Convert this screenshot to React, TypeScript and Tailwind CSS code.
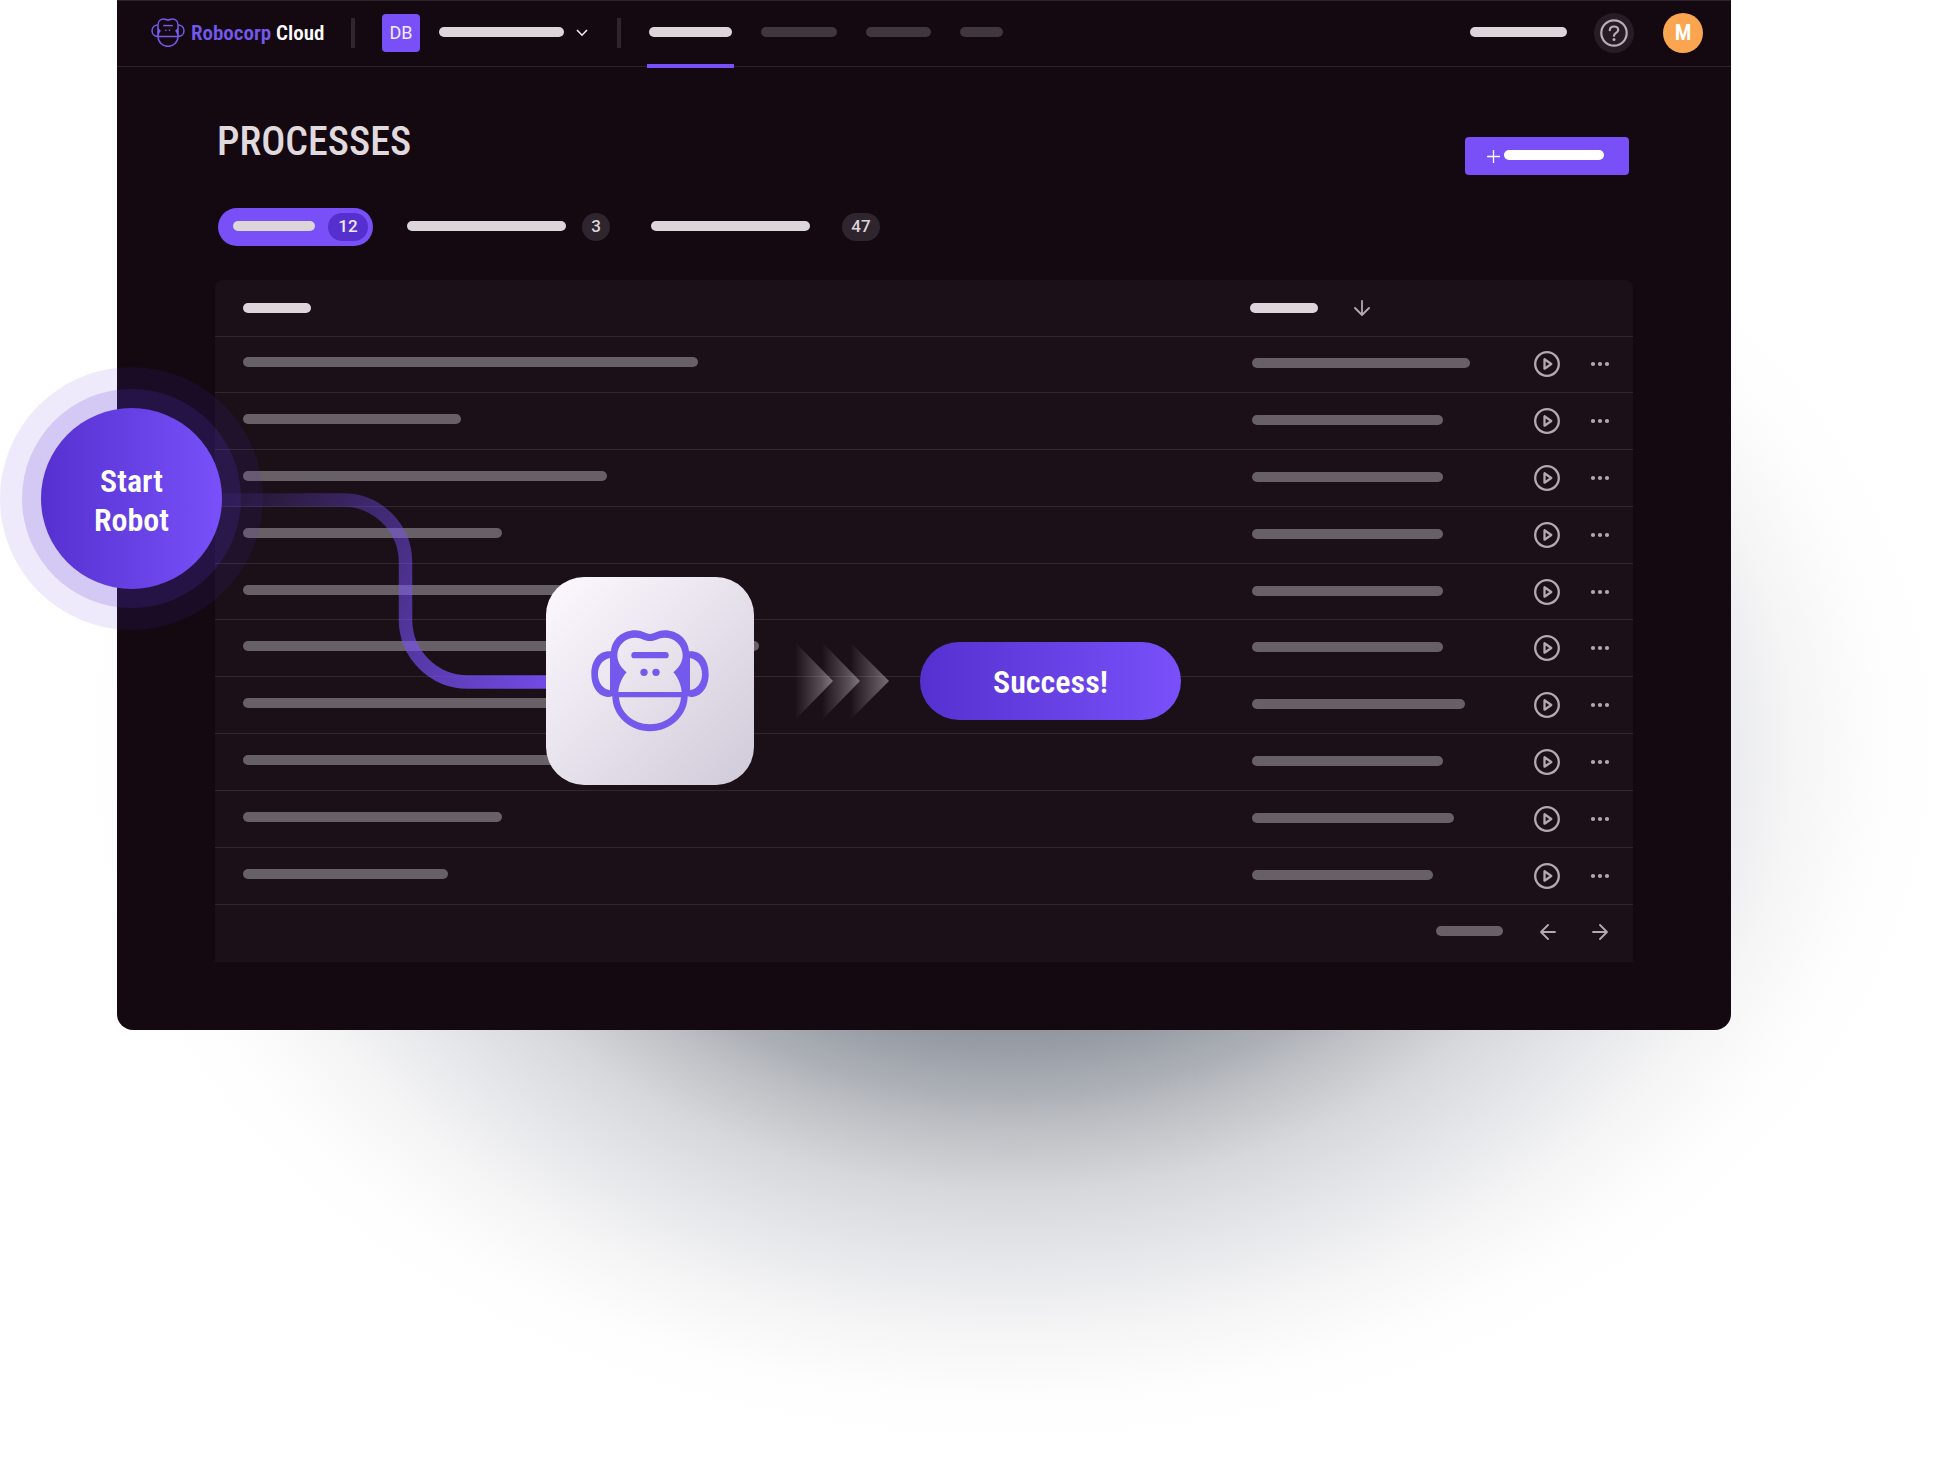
import React from "react";

const narrow = "font-['Roboto_Condensed','Liberation_Sans_Narrow','Roboto',sans-serif]";

const rows = [
  { name: "w-[455px]", date: "w-[218px]" },
  { name: "w-[218px]", date: "w-[191px]" },
  { name: "w-[364px]", date: "w-[191px]" },
  { name: "w-[259px]", date: "w-[191px]" },
  { name: "w-[455px]", date: "w-[191px]" },
  { name: "w-[516px]", date: "w-[191px]" },
  { name: "w-[455px]", date: "w-[213px]" },
  { name: "w-[455px]", date: "w-[191px]" },
  { name: "w-[259px]", date: "w-[202px]" },
  { name: "w-[205px]", date: "w-[181px]" },
];

function Bar({ className }: { className: string }) {
  return <span aria-hidden="true" className={`block h-2.5 shrink-0 rounded-full ${className}`} />;
}

function LogoMark() {
  return (
    <svg width="34" height="29" viewBox="122 56 103 88" fill="none" stroke="#7359ec" strokeWidth="4.500" aria-hidden="true">
      <path d="M143 112V78C143 67 150 59 160 59C166 59 168 62 173.500 62C179 62 181 59 187 59C197 59 204 67 204 78V112" />
      <path d="M143 77C131 77 125 86 125 95C125 104 131 112 143 112M204 77C216 77 222 86 222 95C222 104 216 112 204 112" />
      <path d="M143 112H204C203 131 189 142 173.500 142C158 142 144 131 143 112Z" />
      <path d="M143 82C144 88 148 91 152 95C148 100 146 105 145 111H142ZM204 82C203 88 199 91 195 95C199 100 201 105 202 111H205Z" fill="#7359ec" stroke="none" />
      <path d="M159 79H188" />
      <path d="M165 93H169M176 93H180" />
    </svg>
  );
}

function RobotFace() {
  return (
    <svg width="118" height="102" viewBox="32 59 354 306" fill="#7359ec" aria-hidden="true">
      <path
        fillRule="evenodd"
        d="M92 123C95 86 126 60 165 60C186 60 196 71 209 71C222 71 232 60 253 60C292 60 323 86 326 123H332C363 123 385 150 385 191C385 232 363 260 332 260L322 258C322 316 270 363 209 363C148 363 96 316 96 258L86 260C55 260 33 232 33 191C33 150 55 123 86 123ZM111 135C111 158 125 174 139 186C126 200 116 222 114 245H304C302 222 292 200 279 186C293 174 307 158 307 135C307 104 282 82 253 82C234 82 227 92 209 92C191 92 184 82 165 82C136 82 111 104 111 135ZM116 261C119 307 159 342 209 342C259 342 299 307 302 261ZM89 143C67 147 53 166 53 191C53 217 67 236 89 240ZM329 143V240C351 236 365 217 365 191C365 166 351 147 329 143Z"
      />
      <rect x="153" y="125" width="112" height="19" rx="9.500" />
      <circle cx="191" cy="186" r="11" />
      <circle cx="227" cy="186" r="11" />
    </svg>
  );
}

function PlayIcon() {
  return (
    <svg width="26" height="26" viewBox="0 0 26 26" fill="none" stroke="currentColor" strokeWidth="2.300" aria-hidden="true">
      <circle cx="13" cy="13" r="11.800" />
      <path d="M10.500 8.300V17.700L17.300 13Z" strokeLinejoin="round" />
    </svg>
  );
}

function DotsIcon() {
  return (
    <svg width="20" height="6" viewBox="0 0 20 6" fill="currentColor" aria-hidden="true">
      <circle cx="3" cy="3" r="2.100" />
      <circle cx="10" cy="3" r="2.100" />
      <circle cx="17" cy="3" r="2.100" />
    </svg>
  );
}

function Arrow({ className = "" }: { className?: string }) {
  return (
    <svg className={className} width="16" height="16" viewBox="0 0 16 16" fill="none" stroke="currentColor" strokeWidth="1.800" strokeLinecap="round" strokeLinejoin="round" aria-hidden="true">
      <path d="M1 8H15M8 1L15 8L8 15" />
    </svg>
  );
}

function HelpIcon() {
  return (
    <svg width="28" height="28" viewBox="0 0 28 28" fill="none" stroke="currentColor" strokeWidth="2.200" strokeLinecap="round" aria-hidden="true">
      <circle cx="14" cy="14" r="12.700" />
      <path d="M9.800 11.200C9.900 8.900 11.600 7.500 14 7.500C16.500 7.500 18.200 9 18.200 11C18.200 13.900 14 13.900 14 16.800" />
      <circle cx="14" cy="20.500" r="1.500" fill="currentColor" stroke="none" />
    </svg>
  );
}

function Header() {
  return (
    <header className="flex h-[67px] items-center border-y border-[#2c222b] pb-0.5 pl-[34px] pr-7">
      <a href="#home" className={`flex items-center gap-1.5 text-[21px] font-semibold leading-6 text-white ${narrow}`}>
        <LogoMark />
        <span className="w-[131px] whitespace-nowrap">
          <span className="text-[#7359ec]">Robocorp</span> Cloud
        </span>
      </a>
      <span className="ml-[29px] h-[30px] w-1 bg-[#2f252e]" />
      <span className="ml-[27px] flex size-[38px] items-center justify-center rounded bg-[#7950f8] font-['Roboto',sans-serif] text-[18px] text-[#f1ebfb]">
        DB
      </span>
      <button type="button" aria-label="Workspace" className="ml-[19px] flex items-center gap-3">
        <Bar className="mb-0.5 w-[125px] bg-[#dcd6da]" />
        <svg width="12" height="8" viewBox="0 0 12 8" fill="none" stroke="#f1ebf0" strokeWidth="1.600" aria-hidden="true">
          <path d="M1 1L6 6.200L11 1" />
        </svg>
      </button>
      <span className="ml-[29px] h-[30px] w-1 bg-[#2f252e]" />
      <nav className="ml-[26px] flex h-full items-center gap-[29px]" aria-label="Main">
        <a href="#processes" aria-label="Processes" className="relative -mr-0.5 flex h-full items-center px-0.5">
          <Bar className="mb-0.5 w-[83px] bg-[#dcd6da]" />
          <span className="absolute -bottom-1 left-0 h-1 w-full bg-[#7950f8]" />
        </a>
        <a href="#robots" aria-label="Robots"><Bar className="mb-0.5 w-[76px] bg-[#40363e]" /></a>
        <a href="#assistants" aria-label="Assistants"><Bar className="mb-0.5 w-[65px] bg-[#40363e]" /></a>
        <a href="#vault" aria-label="Vault"><Bar className="mb-0.5 w-[43px] bg-[#40363e]" /></a>
      </nav>
      <div className="ml-auto flex items-center">
        <Bar className="mb-0.5 w-[97px] bg-[#dcd6da]" />
        <button type="button" aria-label="Help" className="ml-[27px] flex size-10 items-center justify-center rounded-full bg-[#271c25] text-[#b9adb6]">
          <HelpIcon />
        </button>
        <button type="button" aria-label="Account" className={`ml-[29px] flex size-10 items-center justify-center rounded-full bg-[#fba550] text-[22px] font-semibold text-white ${narrow}`}>
          M
        </button>
      </div>
    </header>
  );
}

function Badge({ children, className }: { children: React.ReactNode; className: string }) {
  return (
    <span className={`flex h-7 items-center justify-center rounded-full font-['Roboto',sans-serif] text-[17px] font-medium ${className}`}>
      {children}
    </span>
  );
}

function ProcessTable() {
  return (
    <table className="h-[682px] w-full table-fixed border-collapse rounded-t-lg bg-[#1b0f18] text-[#b4a8b1]">
      <colgroup>
        <col />
        <col className="w-[289px]" />
        <col className="w-[120px]" />
      </colgroup>
      <thead>
        <tr className="h-[56px] border-b border-[#312730]">
          <th aria-label="Name" className="pl-7"><Bar className="w-[68px] bg-[#dcd6da]" /></th>
          <th aria-label="Last run" className="pl-[26px]">
            <div className="flex items-center gap-9">
              <Bar className="w-[68px] bg-[#dcd6da]" />
              <Arrow className="rotate-90" />
            </div>
          </th>
          <th aria-label="Actions" />
        </tr>
      </thead>
      <tbody>
        {rows.map((row, i) => (
          <tr key={i} className="border-b border-[#312730]">
            <td className="pb-1 pl-7"><Bar className={`bg-[#686067] ${row.name}`} /></td>
            <td className="pb-0.5 pl-7"><Bar className={`bg-[#686067] ${row.date}`} /></td>
            <td className="pl-[21px]">
              <div className="flex items-center gap-[30px]">
                <button type="button" aria-label="Run process"><PlayIcon /></button>
                <button type="button" aria-label="More actions"><DotsIcon /></button>
              </div>
            </td>
          </tr>
        ))}
      </tbody>
      <tfoot>
        <tr className="h-[58px]">
          <td colSpan={3} className="pb-0.5">
            <div className="flex items-center justify-end pr-[25px]">
              <Bar className="mb-0.5 mr-[37px] w-[67px] bg-[#686067]" />
              <button type="button" aria-label="Previous page" className="mr-9"><Arrow className="rotate-180" /></button>
              <button type="button" aria-label="Next page"><Arrow /></button>
            </div>
          </td>
        </tr>
      </tfoot>
    </table>
  );
}

function Connector() {
  return (
    <svg className="absolute left-[105px] top-[490px]" width="326" height="202" viewBox="222 490 326 202" fill="none" aria-hidden="true">
      <defs>
        <linearGradient id="wire" gradientUnits="userSpaceOnUse" x1="222" y1="500" x2="548" y2="682">
          <stop offset="0" stopColor="#7950f8" stopOpacity="0.080" />
          <stop offset="1" stopColor="#7950f8" stopOpacity="0.920" />
        </linearGradient>
      </defs>
      <path d="M222 500H343A62.500 62.500 0 0 1 405.500 562.500V619.500A62.500 62.500 0 0 0 468 682H548" stroke="url(#wire)" strokeWidth="13.500" />
    </svg>
  );
}

function Chevrons() {
  return (
    <svg width="94" height="78" viewBox="795 643 94 78" aria-hidden="true">
      <defs>
        <linearGradient id="fade">
          <stop offset="0" stopColor="#cfc8ce" stopOpacity="0" />
          <stop offset="1" stopColor="#cfc8ce" stopOpacity="0.500" />
        </linearGradient>
      </defs>
      <path d="M795 643L833 682L795 721Z" fill="url(#fade)" />
      <path d="M822 643L860 682L822 721Z" fill="url(#fade)" />
      <path d="M850 643L889 682L850 721Z" fill="url(#fade)" />
    </svg>
  );
}

function Flow() {
  return (
    <>
      <Connector />
      <div className="absolute -left-[117px] top-[367px] flex size-[263px] items-center justify-center rounded-full bg-[#5b35d6]/10">
        <div className="flex size-[219px] items-center justify-center rounded-full bg-[#5b35d6]/18">
          <button type="button" className={`size-[181px] rounded-full bg-linear-to-r from-[#5630cf] to-[#7950fa] pt-1 text-[32px] font-semibold leading-[39px] text-white ${narrow}`}>
            Start
            <br />
            Robot
          </button>
        </div>
      </div>
      <div className="absolute left-[429px] top-[577px] flex items-center">
        <div className="flex size-[208px] items-center justify-center rounded-[38px] bg-linear-135 from-[#fef9ff] to-[#d0cad9]">
          <RobotFace />
        </div>
        <div className="ml-[41px]">
          <Chevrons />
        </div>
        <div className={`ml-[31px] flex h-[78px] w-[261px] items-center justify-center rounded-full bg-linear-to-r from-[#5630cf] to-[#7950fa] pt-0.5 text-[32px] font-semibold text-white ${narrow}`}>
          Success!
        </div>
      </div>
    </>
  );
}

export default function App() {
  return (
    <div className="min-h-screen overflow-x-hidden bg-white bg-[radial-gradient(930px_700px_at_1012px_745px,#6d737d_0%,#868c95_32%,#9297a0_41%,#acb0b6_50%,#bec0c5_55%,#d6d8db_64%,#e6e7ea_74%,#f5f5f6_84%,#fdfdfd_93%,#ffffff_100%)] pl-[117px] pr-[204px]">
      <div className="relative rounded-b-2xl bg-[#140811] pb-[68px]">
        <Header />
        <main className="px-[98px]">
          <div className="flex items-start justify-between pl-0.5 pr-1 pt-[50px]">
            <h1 className={`text-[40px] font-medium leading-[50px] text-[#e0dade] ${narrow}`}>PROCESSES</h1>
            <button type="button" aria-label="Create process" className="mt-5 flex h-[38px] items-center gap-1 rounded-sm bg-[#7950f8] pl-[22px] pr-[25px]">
              <svg width="13" height="13" viewBox="0 0 13 13" stroke="#ffffff" strokeWidth="1.300" aria-hidden="true">
                <path d="M0 6.500H13M6.500 0V13" />
              </svg>
              <Bar className="mb-0.5 w-[100px] bg-white" />
            </button>
          </div>
          <div className="mt-[33px] flex h-[38px] items-center pl-[3px]">
            <button type="button" aria-label="Active processes" className="flex h-full items-center rounded-full bg-[#7950f8] pl-[15px] pr-[5px]">
              <Bar className="mb-0.5 mr-[13px] w-[82px] bg-[#dcd6da]" />
              <Badge className="w-10 bg-[#5630cf] text-[#f1ebfb]">12</Badge>
            </button>
            <button type="button" aria-label="Scheduled processes" className="ml-[34px] flex items-center">
              <Bar className="mb-0.5 mr-4 w-[159px] bg-[#dcd6da]" />
              <Badge className="w-7 bg-[#2f252e] text-[#dcd6da]">3</Badge>
            </button>
            <button type="button" aria-label="All processes" className="ml-[41px] flex items-center">
              <Bar className="mb-0.5 mr-8 w-[159px] bg-[#dcd6da]" />
              <Badge className="w-[38px] bg-[#2f252e] text-[#dcd6da]">47</Badge>
            </button>
          </div>
          <div className="mt-[34px]">
            <ProcessTable />
          </div>
        </main>
        <Flow />
      </div>
    </div>
  );
}
